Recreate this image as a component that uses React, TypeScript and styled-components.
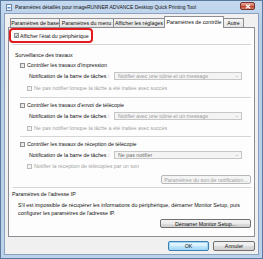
import styled, { createGlobalStyle } from "styled-components";

const GlobalStyle = createGlobalStyle`
  html, body {
    margin: 0;
    padding: 0;
    width: 263px;
    height: 259px;
    overflow: hidden;
    background: #b9d1ea;
  }
  * {
    box-sizing: border-box;
  }
`;

const Window = styled.div`
  width: 263px;
  height: 259px;
  display: flex;
  flex-direction: column;
  padding: 0 3px 3px 3px;
  background: linear-gradient(#c4d9ef, #b7cee8 30px, #bcd2ea);
  border: 1px solid #5c7a9e;
  font-family: "Liberation Sans", Arial, sans-serif;
  font-size: 5.3px;
  color: #111;
`;

const TitleBar = styled.div`
  height: 12px;
  display: flex;
  align-items: center;
  padding-left: 2px;
  gap: 3px;
`;

const AppIcon = styled.svg`
  width: 6px;
  height: 7px;
  flex-shrink: 0;
`;

const TitleText = styled.span`
  color: #111;
  font-size: 5px;
  white-space: nowrap;
`;

const CloseButton = styled.div`
  margin-left: auto;
  margin-right: 4px;
  align-self: flex-start;
  margin-top: 1px;
  width: 15px;
  height: 8px;
  border: 1px solid #73332b;
  border-radius: 2px;
  background: linear-gradient(#e9a99b, #d4705f 45%, #c2412f 55%, #d9826b);
  display: flex;
  align-items: center;
  justify-content: center;
`;

const Client = styled.div`
  flex: 1;
  display: flex;
  flex-direction: column;
  background: #f0f0f0;
  border: 1px solid #8aa2c0;
  padding: 2px 3px 0 3px;
`;

const TabStrip = styled.div`
  height: 11px;
  display: flex;
  align-items: flex-end;
  padding-left: 2px;
`;

const Tab = styled.div<{ $w: number; $active?: boolean }>`
  width: ${(p) => p.$w}px;
  height: ${(p) => (p.$active ? 12 : 9)}px;
  margin-right: -1px;
  margin-bottom: ${(p) => (p.$active ? -1 : 0)}px;
  position: relative;
  z-index: ${(p) => (p.$active ? 2 : 0)};
  border: 1px solid #8c8e94;
  border-bottom: none;
  border-radius: 1px 1px 0 0;
  background: ${(p) => (p.$active ? "#fff" : "linear-gradient(#f4f4f4, #e4e4e4)")};
  display: flex;
  align-items: ${(p) => (p.$active ? "flex-start" : "center")};
  padding-top: ${(p) => (p.$active ? 2 : 0)}px;
  justify-content: center;
  white-space: nowrap;
  color: #111;
`;

const Panel = styled.div`
  position: relative;
  z-index: 1;
  height: 210px;
  border: 1px solid #8c8e94;
  background: #fdfdfd;
  display: flex;
  flex-direction: column;
`;

const Highlight = styled.div`
  width: 84px;
  height: 15px;
  border: 2px solid #e3191c;
  border-radius: 4px;
  display: flex;
  align-items: center;
  gap: 1px;
  padding-left: 3px;
`;

const Divider = styled.div<{ $left: number; $top: number }>`
  height: 2px;
  margin: ${(p) => p.$top}px 3px 0 ${(p) => p.$left}px;
  border-top: 1px solid #d5d5d5;
  border-bottom: 1px solid #ffffff;
`;

const Heading = styled.div<{ $left: number; $top: number }>`
  height: 8px;
  line-height: 8px;
  margin: ${(p) => p.$top}px 0 0 ${(p) => p.$left}px;
  white-space: nowrap;
  color: #111;
`;

const Row = styled.div<{ $left: number; $top: number; $disabled?: boolean }>`
  height: 8px;
  display: flex;
  align-items: center;
  gap: 2px;
  margin: ${(p) => p.$top}px 0 0 ${(p) => p.$left}px;
  white-space: nowrap;
  color: ${(p) => (p.$disabled ? "#a2a2a2" : "#111")};
`;

const Box = styled.span<{ $disabled?: boolean }>`
  width: 5px;
  height: 5px;
  flex-shrink: 0;
  border: 1px solid ${(p) => (p.$disabled ? "#bcbcbc" : "#8e8f8f")};
  background: ${(p) => (p.$disabled ? "#f4f4f4" : "linear-gradient(135deg, #d8d8d8, #fbfbfb)")};
  display: flex;
  align-items: center;
  justify-content: center;
`;

const FieldLabel = styled.span`
  width: 83px;
  flex-shrink: 0;
`;

const Select = styled.div<{ $dim?: boolean }>`
  width: 128px;
  height: 8px;
  border: 1px solid #c6c6c6;
  background: #f4f4f4;
  display: flex;
  align-items: center;
  padding: 0 3px;
  color: ${(p) => (p.$dim ? "#9a9a9a" : "#6d6d6d")};
`;

const Arrow = styled.span`
  margin-left: auto;
  width: 0;
  height: 0;
  border-left: 1.5px solid transparent;
  border-right: 1.5px solid transparent;
  border-top: 1.5px solid #9c9c9c;
`;

const PushButton = styled.div<{ $w: number; $top: number; $disabled?: boolean }>`
  align-self: flex-end;
  width: ${(p) => p.$w}px;
  height: 9px;
  margin: ${(p) => p.$top}px 3px 0 0;
  border: 1px solid ${(p) => (p.$disabled ? "#b5b9bc" : "#707070")};
  border-radius: 2px;
  background: ${(p) =>
    p.$disabled ? "#f4f4f4" : "linear-gradient(#f3f3f3, #ebebeb 50%, #dddddd 50%, #cfcfcf)"};
  color: ${(p) => (p.$disabled ? "#a0a0a0" : "#111")};
  display: flex;
  align-items: center;
  justify-content: center;
  white-space: nowrap;
`;

const Paragraph = styled.div`
  margin: 3px 0 0 9px;
  line-height: 8px;
  white-space: nowrap;
  color: #111;
`;

const Footer = styled.div`
  display: flex;
  justify-content: flex-end;
  gap: 4px;
  margin-top: 4px;
`;

const DialogButton = styled.div<{ $w: number; $default?: boolean }>`
  width: ${(p) => p.$w}px;
  height: 10px;
  border: 1px solid ${(p) => (p.$default ? "#3c7fb1" : "#707070")};
  border-radius: 2px;
  background: ${(p) =>
    p.$default
      ? "linear-gradient(#eaf6fd, #d9f0fc 50%, #bee6fd 50%, #a7d9f5)"
      : "linear-gradient(#f2f2f2, #ebebeb 50%, #dddddd 50%, #cfcfcf)"};
  box-shadow: ${(p) => (p.$default ? "inset 0 0 0 1px #9fd8f7" : "none")};
  display: flex;
  align-items: center;
  justify-content: center;
  color: #111;
`;

const Check = () => (
  <svg width="4" height="4" viewBox="0 0 4 4">
    <path d="M0.5 2 L1.6 3.2 L3.6 0.6" fill="none" stroke="#2a3a4c" strokeWidth="0.9" />
  </svg>
);

type JobProps = {
  top: number;
  label: string;
  value: string;
  sub: string;
  subGap: number;
  dim?: boolean;
};

const JobSection = ({ top, label, value, sub, subGap, dim }: JobProps) => (
  <>
    <Row $left={11} $top={top}>
      <Box />
      {label}
    </Row>
    <Row $left={20} $top={3}>
      <FieldLabel>Notification de la barre de tâches :</FieldLabel>
      <Select $dim={dim}>
        {value}
        <Arrow />
      </Select>
    </Row>
    <Row $left={18} $top={subGap} $disabled>
      <Box $disabled />
      {sub}
    </Row>
  </>
);

const tabs = [
  { label: "Paramètres de base", w: 50 },
  { label: "Paramètres du menu", w: 55 },
  { label: "Afficher les réglages", w: 52 },
  { label: "Paramètres de contrôle", w: 60, active: true },
  { label: "Autre", w: 21 },
];

export default function App() {
  return (
    <>
      <GlobalStyle />
      <Window>
        <TitleBar>
          <AppIcon viewBox="0 0 6 7">
            <rect x="0.5" y="0.5" width="5" height="6" fill="#f4f7fb" stroke="#6f86a3" strokeWidth="1" />
            <rect x="1.5" y="3" width="3" height="1.5" fill="#4d8fd6" />
          </AppIcon>
          <TitleText>Paramètres détaillés pour imageRUNNER ADVANCE Desktop Quick Printing Tool</TitleText>
          <CloseButton>
            <svg width="6" height="5" viewBox="0 0 6 5">
              <path d="M1 0.8 L5 4.2 M5 0.8 L1 4.2" stroke="#fff" strokeWidth="1.2" />
            </svg>
          </CloseButton>
        </TitleBar>
        <Client>
          <TabStrip>
            {tabs.map((t) => (
              <Tab key={t.label} $w={t.w} $active={t.active}>
                {t.label}
              </Tab>
            ))}
          </TabStrip>
          <Panel>
            <Highlight>
              <Box>
                <Check />
              </Box>
              Afficher l'état du périphérique
            </Highlight>
            <Divider $left={3} $top={1} />
            <Heading $left={6} $top={5}>
              Surveillance des travaux
            </Heading>
            <JobSection
              top={2}
              label="Contrôler les travaux d'impression"
              value="Notifier avec une icône et un message"
              sub="Ne pas notifier lorsque la tâche a été traitée avec succès"
              subGap={4}
              dim
            />
            <Divider $left={11} $top={5} />
            <JobSection
              top={2}
              label="Contrôler les travaux d'envoi de télécopie"
              value="Notifier avec une icône et un message"
              sub="Ne pas notifier lorsque la tâche a été traitée avec succès"
              subGap={4}
              dim
            />
            <Divider $left={11} $top={4} />
            <JobSection
              top={2}
              label="Contrôler les travaux de réception de télécopie"
              value="Ne pas notifier"
              sub="Notifier la réception de télécopies par un son"
              subGap={3}
            />
            <PushButton $w={90} $top={5} $disabled>
              Paramètres du son de notification...
            </PushButton>
            <Divider $left={4} $top={3} />
            <Heading $left={3} $top={1}>
              Paramètres de l'adresse IP
            </Heading>
            <Paragraph>
              S'il est impossible de récupérer les informations du périphérique, démarrer Monitor Setup, puis
              <br />
              configurer les paramètres de l'adresse IP.
            </Paragraph>
            <PushButton $w={91} $top={2}>
              Démarrer Monitor Setup...
            </PushButton>
          </Panel>
          <Footer>
            <DialogButton $w={41} $default>
              OK
            </DialogButton>
            <DialogButton $w={42}>Annuler</DialogButton>
          </Footer>
        </Client>
      </Window>
    </>
  );
}
